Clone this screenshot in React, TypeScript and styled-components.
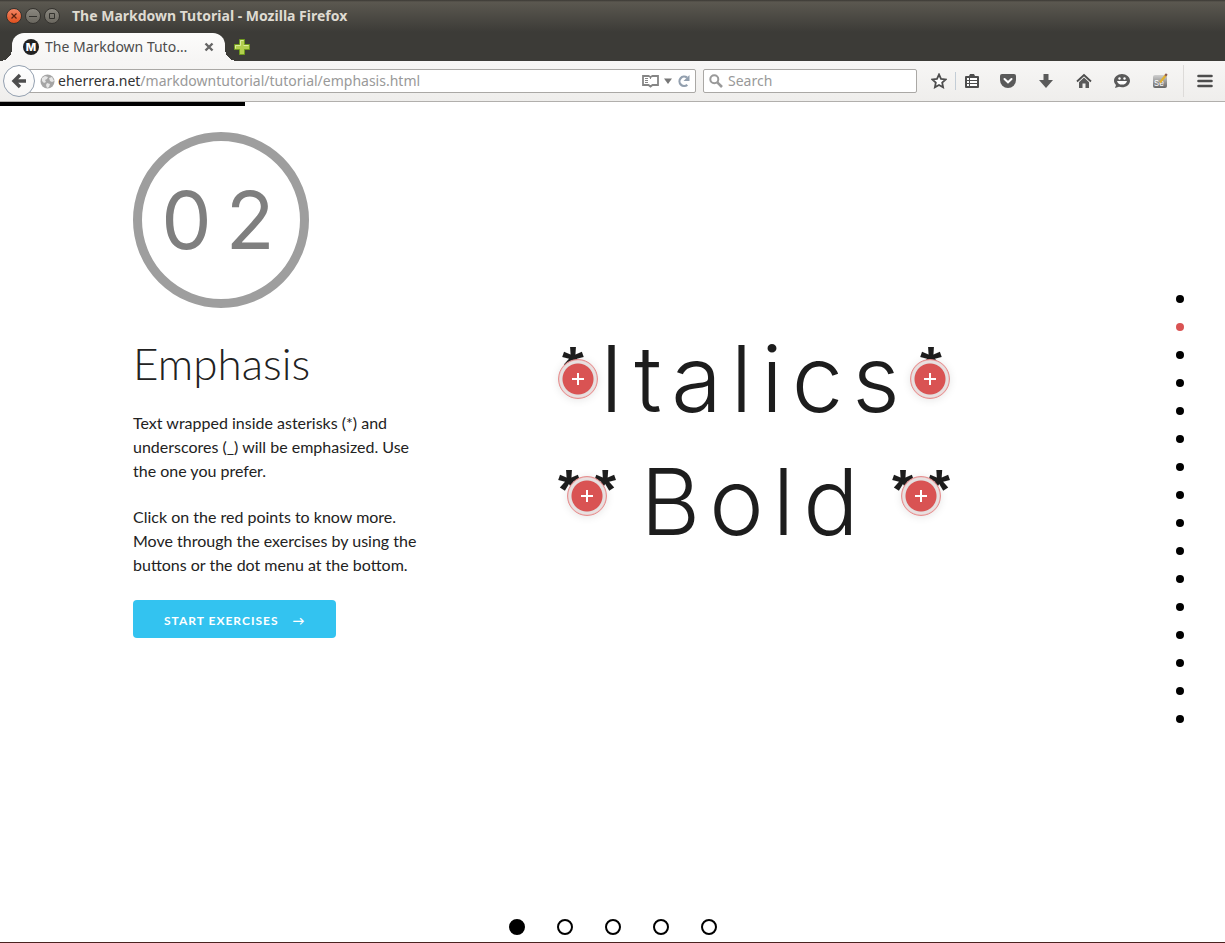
import React from "react";
import styled, { createGlobalStyle } from "styled-components";

const GlobalStyle = createGlobalStyle`
  * { box-sizing: border-box; }
  body { margin: 0; background: #fff; }
  button { font: inherit; color: inherit; background: none; border: 0; padding: 0; cursor: pointer; }
  h1, p, ul { margin: 0; padding: 0; }
  ul { list-style: none; }
`;

const uiFont = `"Noto Sans", "Open Sans", sans-serif`;
const pageFont = `Lato, "Open Sans", sans-serif`;

const Window = styled.div`
  display: flex;
  flex-direction: column;
  min-height: 100vh;
  border-bottom: 1px solid #4a2320;
  background: #fff;
`;

const Frame = styled.header`
  background: linear-gradient(#3a3833 0, #5b5850 2px, #3c3b37 32px, #3c3b37 100%);
  font-family: ${uiFont};
`;

const TitleBar = styled.div`
  display: flex;
  align-items: center;
  gap: 3px;
  height: 33px;
  padding: 0 6px 2px;
`;

const WindowButton = styled.button<{ $close?: boolean }>`
  display: grid;
  place-items: center;
  width: 16px;
  height: 16px;
  border-radius: 50%;
  border: 1px solid #35332f;
  background: ${(p) => (p.$close ? "linear-gradient(#f58664, #e0501e)" : "linear-gradient(#8b8880, #6a675f)")};
`;

const WindowTitle = styled.span`
  margin-left: 9px;
  color: #dfdbd2;
  font-size: 14px;
  font-weight: 700;
  line-height: 20px;
  white-space: nowrap;
`;

const TabStrip = styled.div`
  display: flex;
  align-items: center;
  gap: 9px;
  height: 28px;
  padding-left: 12px;
`;

const Tab = styled.div`
  position: relative;
  display: flex;
  align-items: center;
  width: 213px;
  height: 28px;
  padding: 0 10px 0 11px;
  border-radius: 12px 12px 0 0;
  background: linear-gradient(#fcfcfb, #f6f5f4);
  &::before, &::after {
    content: "";
    position: absolute;
    bottom: 0;
    width: 12px;
    height: 12px;
  }
  &::before { right: 100%; background: radial-gradient(circle at 0 0, transparent 12px, #f6f5f4 12px); }
  &::after { left: 100%; background: radial-gradient(circle at 100% 0, transparent 12px, #f6f5f4 12px); }
`;

const Favicon = styled.span`
  flex: none;
  width: 16px;
  height: 16px;
  border-radius: 50%;
  background: #222;
  color: #fff;
  font-family: Inter, sans-serif;
  font-size: 11px;
  font-weight: 800;
  line-height: 16px;
  text-align: center;
`;

const TabTitle = styled.span`
  flex: 1;
  margin-left: 6px;
  color: #4c4c4c;
  font-size: 14px;
  line-height: 20px;
  white-space: nowrap;
`;

const IconButton = styled.button`
  display: grid;
  place-items: center;
  flex: none;
`;

const NewTab = styled(IconButton)`
  width: 16px;
  height: 16px;
`;

const Toolbar = styled.div`
  display: flex;
  align-items: center;
  height: 41px;
  padding-left: 3px;
  border-bottom: 1px solid #b1afac;
  background: linear-gradient(#f7f6f5, #efeeec);
`;

const BackButton = styled(IconButton)`
  z-index: 1;
  width: 32px;
  height: 32px;
  border: 1px solid #93a0b0;
  border-radius: 50%;
  background: linear-gradient(#fff, #f6f5f4);
`;

const Field = styled.div`
  display: flex;
  align-items: center;
  height: 24px;
  border: 1px solid #aaa8a5;
  border-radius: 2px;
  background: #fff;
`;

const AddressField = styled(Field)`
  flex: 1;
  min-width: 0;
  margin-left: -10px;
  padding: 0 4px 0 14px;
`;

const Address = styled.a`
  flex: 1;
  min-width: 0;
  margin-left: 3px;
  overflow: hidden;
  color: #999;
  font-size: 14px;
  line-height: 20px;
  text-decoration: none;
  white-space: nowrap;
`;

const Host = styled.span`
  color: #333;
`;

const FieldTools = styled.div`
  display: flex;
  align-items: center;
  gap: 5px;
`;

const SearchField = styled(Field).attrs({ as: "label" })`
  width: 214px;
  margin-left: 7px;
  padding: 0 5px;
  gap: 5px;
`;

const SearchInput = styled.input`
  flex: 1;
  min-width: 0;
  padding: 0;
  border: 0;
  outline: 0;
  background: none;
  color: #333;
  font-family: ${uiFont};
  font-size: 14px;
  line-height: 20px;
  &::placeholder { color: #999; opacity: 1; }
`;

const Tools = styled.div`
  display: flex;
  align-items: center;
  align-self: stretch;
  margin-left: 6px;
`;

const ToolButton = styled(IconButton)<{ $width?: number }>`
  width: ${(p) => p.$width ?? 38}px;
  height: 32px;
`;

const Separator = styled.span<{ $tall?: boolean }>`
  width: 1px;
  height: ${(p) => (p.$tall ? 32 : 18)}px;
  margin-left: ${(p) => (p.$tall ? 4 : 0)}px;
  background: ${(p) => (p.$tall ? "#dddbd9" : "#c3cdd6")};
`;

const Progress = styled.div`
  width: 20%;
  height: 4px;
  background: #000;
`;

const Slide = styled.main`
  display: grid;
  grid-template-columns: 290px minmax(0, 1fr) auto;
  column-gap: 135px;
  align-items: start;
  flex: 1;
  padding: 26px 41px 0 133px;
  color: #222;
  font-family: ${pageFont};
`;

const Badge = styled.div`
  display: grid;
  place-items: center;
  width: 176px;
  height: 176px;
  padding-left: 8px;
  border: 9px solid #9e9e9e;
  border-radius: 50%;
  color: #7f7f7f;
  font-family: Inter, sans-serif;
  font-size: 80px;
  letter-spacing: 14px;
  line-height: 96px;
`;

const Heading = styled.h1`
  margin-top: 29px;
  font-size: 44px;
  font-weight: 300;
  line-height: 52px;
`;

const Paragraph = styled.p`
  margin-top: 22px;
  font-size: 16px;
  line-height: 24px;
`;

const StartButton = styled.button`
  display: flex;
  align-items: center;
  gap: 14px;
  height: 38px;
  margin-top: 23px;
  padding: 4px 30px 0 31px;
  border-radius: 4px;
  background: #33c3f0;
  color: #fff;
  font-family: ${pageFont};
  font-size: 12px;
  font-weight: 700;
  letter-spacing: 1px;
  line-height: 24px;
  text-transform: uppercase;
`;

const Samples = styled.div`
  display: grid;
  width: 392px;
  max-width: 100%;
  row-gap: 23px;
  margin-top: 197px;
`;

const Sample = styled.div`
  display: flex;
  justify-content: space-between;
  height: 100px;
`;

const Word = styled.span`
  flex: 1;
  min-width: 0;
  color: #1d1d1d;
  font-family: Inter, sans-serif;
  font-size: 92px;
  font-weight: 300;
  letter-spacing: 9px;
  line-height: 100px;
  text-align: center;
`;

const Marks = styled.span<{ $double: boolean; $closing: boolean }>`
  position: relative;
  display: flex;
  flex: none;
  justify-content: space-between;
  width: ${(p) => (p.$double ? 58 : 40)}px;
  padding-left: ${(p) => (p.$double ? 0 : p.$closing ? 10 : 4)}px;
  color: #1d1d1d;
  font-family: "Liberation Sans", sans-serif;
  font-size: 56px;
  font-weight: 700;
  line-height: 74px;
`;

const Hotspot = styled.button<{ $top: number }>`
  position: absolute;
  top: ${(p) => p.$top}px;
  left: 50%;
  display: grid;
  place-items: center;
  width: 40px;
  height: 40px;
  margin-left: -20px;
  border: 1px solid #e58e8e;
  border-radius: 50%;
  background: radial-gradient(circle, #d95353 15px, #e3e0e0 16px, #ebe0e0 18px, #e9a5a5 20px);
  box-shadow: 0 1px 8px rgba(0, 0, 0, 0.1);
`;

const SlideNav = styled.ul`
  display: grid;
  gap: 20px;
  margin-top: 163px;
`;

const SlideDot = styled.button<{ $current: boolean }>`
  display: block;
  width: 8px;
  height: 8px;
  border-radius: 50%;
  background: ${(p) => (p.$current ? "#d95353" : "#000")};
`;

const StepNav = styled.nav`
  display: flex;
  justify-content: center;
  gap: 32px;
  padding: 16px 0 7px;
`;

const StepDot = styled.button<{ $current: boolean }>`
  width: 16px;
  height: 16px;
  border: 2px solid #000;
  border-radius: 50%;
  background: ${(p) => (p.$current ? "#000" : "#fff")};
`;

const Plus = () => (
  <svg width="12" height="12" viewBox="0 0 12 12"><path d="M6 0v12M0 6h12" stroke="#fff" strokeWidth="2" /></svg>
);

const ink = "#4d4d4d";

function Chrome() {
  return (
    <Frame>
      <TitleBar>
        <WindowButton $close aria-label="Close window">
          <svg width="6" height="6" viewBox="0 0 6 6"><path d="M.5.5l5 5M5.500.5l-5 5" stroke="#5a2210" strokeWidth="1.2" /></svg>
        </WindowButton>
        <WindowButton aria-label="Minimize">
          <svg width="8" height="8" viewBox="0 0 8 8"><path d="M0 4.500h8" stroke="#33322e" /></svg>
        </WindowButton>
        <WindowButton aria-label="Maximize">
          <svg width="8" height="8" viewBox="0 0 8 8"><path d="M1.500 1.500h5v5h-5z" fill="none" stroke="#33322e" /></svg>
        </WindowButton>
        <WindowTitle>The Markdown Tutorial - Mozilla Firefox</WindowTitle>
      </TitleBar>
      <TabStrip>
        <Tab>
          <Favicon>M</Favicon>
          <TabTitle>The Markdown Tuto…</TabTitle>
          <IconButton aria-label="Close tab">
            <svg width="12" height="12" viewBox="0 0 12 12"><path d="M2.500 2.500l7 7M9.500 2.500l-7 7" stroke="#666" strokeWidth="2.400" /></svg>
          </IconButton>
        </Tab>
        <NewTab aria-label="New tab">
          <svg width="16" height="16" viewBox="0 0 16 16">
            <path d="M5.500.5h5v5h5v5h-5v5h-5v-5h-5v-5h5z" fill="#b3cf4e" stroke="#6f9a1e" />
            <path d="M6.500 6.500v-5h3M1.500 9.500v-3h5M9.500 6.500h5" fill="none" stroke="#dcec9d" />
          </svg>
        </NewTab>
      </TabStrip>
      <Toolbar>
        <BackButton aria-label="Back">
          <svg width="16" height="16" viewBox="0 0 16 16"><path d="M9 2L3 8l6 6M3 8h12" fill="none" stroke={ink} strokeWidth="3.400" /></svg>
        </BackButton>
        <AddressField>
          <svg width="15" height="15" viewBox="0 0 15 15">
            <circle cx="7.500" cy="7.500" r="7" fill="#a5a5a5" />
            <path d="M2 4l3-2 3 1-1 2-2 1 1 2-2 1-2-2zM9 4l3-1 2 4-2 1-2-1zM7 9l3 1-1 3-2 1-1-3z" fill="#e6e6e6" />
          </svg>
          <Address href="#"><Host>eherrera.net</Host>/markdowntutorial/tutorial/emphasis.html</Address>
          <FieldTools>
            <IconButton aria-label="Reader view">
              <svg width="17" height="14" viewBox="0 0 17 14">
                <path d="M1 2h5.500l2 1 2-1H16v9h-5.500l-2 1.500-2-1.500H1z" fill="#fff" stroke="#858585" strokeWidth="1.800" />
                <path d="M8.500 3v2M3 4.500h3M3 6.500h3M3 8.500h3" stroke="#858585" />
              </svg>
            </IconButton>
            <IconButton aria-label="History">
              <svg width="8" height="6" viewBox="0 0 8 6"><path d="M0 .5h8L4 6z" fill="#777" /></svg>
            </IconButton>
            <IconButton aria-label="Reload">
              <svg width="14" height="14" viewBox="0 0 14 14">
                <path d="M10.300 10.800A4.700 4.700 0 1 1 10 3.500" fill="none" stroke="#929fae" strokeWidth="2.200" />
                <path d="M12.500 1v6h-6z" fill="#929fae" />
              </svg>
            </IconButton>
          </FieldTools>
        </AddressField>
        <SearchField>
          <svg width="14" height="14" viewBox="0 0 14 14">
            <circle cx="5.300" cy="5.300" r="4" fill="none" stroke="#999" strokeWidth="2" />
            <path d="M8.300 8.300L13 13" stroke="#999" strokeWidth="2.600" />
          </svg>
          <SearchInput type="text" placeholder="Search" aria-label="Search" />
        </SearchField>
        <Tools>
          <ToolButton $width={32} aria-label="Bookmark">
            <svg width="16" height="16" viewBox="0 0 16 16"><path d="M8 1.500l2 4.300 4.700.6-3.500 3.200.9 4.700L8 12l-4.100 2.300.9-4.700L1.300 6.400 6 5.800z" fill="#fff" stroke={ink} strokeWidth="1.800" /></svg>
          </ToolButton>
          <Separator />
          <ToolButton $width={33} aria-label="Bookmarks list">
            <svg width="16" height="16" viewBox="0 0 16 16">
              <path d="M0 4a1 1 0 0 1 1-1h3l1-2h4l1 2h3a1 1 0 0 1 1 1v10a1 1 0 0 1-1 1H1a1 1 0 0 1-1-1z" fill={ink} />
              <path d="M2 6h2M5 6h7M2 9h2M5 9h7M2 12h2M5 12h7" stroke="#fff" strokeWidth="1.800" />
            </svg>
          </ToolButton>
          <ToolButton aria-label="Pocket">
            <svg width="16" height="16" viewBox="0 0 16 16">
              <path d="M0 3a2 2 0 0 1 2-2h12a2 2 0 0 1 2 2v4a8 8 0 0 1-16 0z" fill="#5a5a5a" />
              <path d="M4.500 6L8 9.300 11.500 6" fill="none" stroke="#fff" strokeWidth="2" strokeLinecap="round" />
            </svg>
          </ToolButton>
          <ToolButton aria-label="Downloads">
            <svg width="16" height="16" viewBox="0 0 16 16"><path d="M5.500 1h5v6H15l-7 8-7-8h4.500z" fill="#5a5a5a" /></svg>
          </ToolButton>
          <ToolButton aria-label="Home">
            <svg width="16" height="16" viewBox="0 0 16 16">
              <path d="M1 8.500L8 2l7 6.500" fill="none" stroke={ink} strokeWidth="1.800" />
              <path d="M3 9.200l5-4.600 5 4.600V15H9.500v-4.500h-3V15H3z" fill="#5a5a5a" />
            </svg>
          </ToolButton>
          <ToolButton aria-label="Chat">
            <svg width="16" height="16" viewBox="0 0 16 16">
              <path d="M8 1c4.400 0 8 3 8 6.700s-3.600 6.600-8 6.600c-1 0-2-.2-3-.5L1 15l1-3C.8 10.800 0 9.300 0 7.700 0 4 3.600 1 8 1z" fill="#5a5a5a" />
              <circle cx="5.500" cy="5.500" r="1.200" fill="#fff" /><circle cx="10.500" cy="5.500" r="1.200" fill="#fff" />
              <path d="M3 8h10c-.5 2.500-2.500 3.600-5 3.600s-4.500-1.100-5-3.600z" fill="#fff" />
            </svg>
          </ToolButton>
          <ToolButton aria-label="Selenium IDE">
            <svg width="16" height="16" viewBox="0 0 16 16">
              <defs><linearGradient id="tile" x2="0" y2="1"><stop stopColor="#d0d0d0" /><stop offset="1" stopColor="#666" /></linearGradient></defs>
              <rect x="1" y="2" width="14" height="13" rx="2" fill="url(#tile)" />
              <text x="2" y="13" fill="#fff" fontFamily="Inter, sans-serif" fontSize="8">Se</text>
              <path d="M8 9.500l6-7.500" stroke="#e0b030" strokeWidth="2.200" />
              <path d="M13.300 2.800l1.500-1.800" stroke="#8a5a50" strokeWidth="2.200" />
            </svg>
          </ToolButton>
          <Separator $tall />
          <ToolButton $width={41} aria-label="Menu">
            <svg width="16" height="14" viewBox="0 0 16 14"><path d="M1.500 2h13M1.500 7h13M1.500 12h13" stroke={ink} strokeWidth="2.600" strokeLinecap="round" /></svg>
          </ToolButton>
        </Tools>
      </Toolbar>
    </Frame>
  );
}

function Mark({ text, top, closing, label }: { text: string; top: number; closing: boolean; label: string }) {
  return (
    <Marks $double={text.length > 1} $closing={closing}>
      {text.split("").map((m, i) => <span key={i}>{m}</span>)}
      <Hotspot $top={top} aria-label={label}><Plus /></Hotspot>
    </Marks>
  );
}

function SampleRow({ word, mark, top }: { word: string; mark: string; top: number }) {
  return (
    <Sample>
      <Mark text={mark} top={top} closing={false} label={`${word}: opening mark`} />
      <Word>{word}</Word>
      <Mark text={mark} top={top} closing label={`${word}: closing mark`} />
    </Sample>
  );
}

export default function App() {
  return (
    <Window>
      <GlobalStyle />
      <Chrome />
      <Progress />
      <Slide>
        <section>
          <Badge>02</Badge>
          <Heading>Emphasis</Heading>
          <Paragraph>Text wrapped inside asterisks (*) and underscores (_) will be emphasized. Use the one you prefer.</Paragraph>
          <Paragraph>Click on the red points to know more. Move through the exercises by using the buttons or the dot menu at the bottom.</Paragraph>
          <StartButton><span>Start exercises</span><span>→</span></StartButton>
        </section>
        <Samples>
          <SampleRow word="Italics" mark="*" top={30} />
          <SampleRow word="Bold" mark="**" top={24} />
        </Samples>
        <SlideNav>
          {Array.from({ length: 16 }, (_, i) => (
            <li key={i}><SlideDot $current={i === 1} aria-label={`Lesson ${i + 1}`} /></li>
          ))}
        </SlideNav>
      </Slide>
      <StepNav>
        {Array.from({ length: 5 }, (_, i) => <StepDot key={i} $current={i === 0} aria-label={`Exercise ${i + 1}`} />)}
      </StepNav>
    </Window>
  );
}
